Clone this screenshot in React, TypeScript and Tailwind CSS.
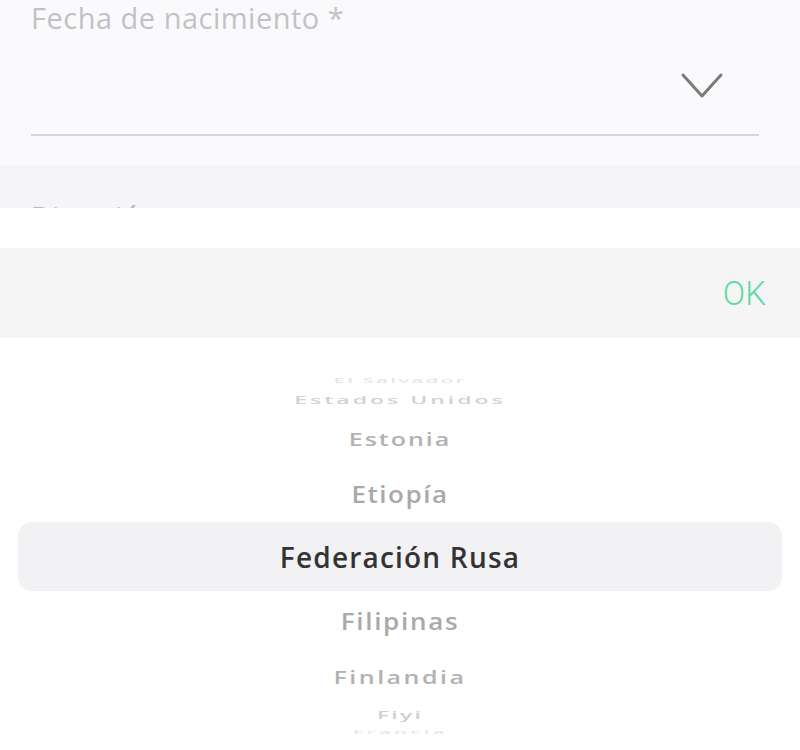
import React from 'react';

type Row = {
  label: string;
  h: string;
  scale: string;
  color: string;
  size: string;
  track: string;
};

const ROWS_ABOVE: Row[] = [
  { label: 'El Salvador', h: 'h-[17px]', scale: 'scale-y-[0.3]', color: 'text-[#e6e6e6]', size: 'text-[21px]', track: 'tracking-[2px]' },
  { label: 'Estados Unidos', h: 'h-[21px]', scale: 'scale-y-[0.5]', color: 'text-[#d2d2d2]', size: 'text-[23px]', track: 'tracking-[3px]' },
  { label: 'Estonia', h: 'h-[56px]', scale: 'scale-y-[0.75]', color: 'text-[#b2b2b2]', size: 'text-[25px]', track: 'tracking-[2px]' },
  { label: 'Etiopía', h: 'h-[56px]', scale: 'scale-y-[0.92]', color: 'text-[#a9a9a9]', size: 'text-[26px]', track: 'tracking-[1.5px]' },
];

const ROWS_BELOW: Row[] = [
  { label: 'Filipinas', h: 'h-[60px]', scale: 'scale-y-[0.92]', color: 'text-[#a9a9a9]', size: 'text-[26px]', track: 'tracking-[1.7px]' },
  { label: 'Finlandia', h: 'h-[50px]', scale: 'scale-y-[0.75]', color: 'text-[#b2b2b2]', size: 'text-[25px]', track: 'tracking-[2.5px]' },
  { label: 'Fiyi', h: 'h-[26px]', scale: 'scale-y-[0.5]', color: 'text-[#cfcfcf]', size: 'text-[23px]', track: 'tracking-[2.2px]' },
  { label: 'Francia', h: 'h-[10px]', scale: 'scale-y-[0.25]', color: 'text-[#e6e6e6]', size: 'text-[21px]', track: 'tracking-[3px]' },
];

function WheelRow({ row }: { row: Row }) {
  return (
    <div className={`${row.h} flex items-center justify-center overflow-hidden shrink-0`}>
      <span className={`${row.size} ${row.color} ${row.scale} ${row.track} font-semibold leading-none`}>
        {row.label}
      </span>
    </div>
  );
}

export default function App() {
  return (
    <div className="w-[800px] h-[750px] overflow-hidden bg-white flex flex-col" style={{ fontFamily: '"Open Sans", "Noto Sans", sans-serif' }}>
      {/* date field */}
      <div className="h-[165px] shrink-0 bg-[#fafafc] pl-[31px] pr-[41px] flex flex-col">
        <p className="text-[29px] leading-[35px] text-[#c2c2c4] tracking-[0.5px]">Fecha de nacimiento *</p>
        <div className="flex justify-end pr-[35px] mt-[36px]">
          <svg width="44" height="28" viewBox="0 0 44 28" fill="none">
            <polyline points="3,4 22,25 41,4" stroke="#7a7a7a" strokeWidth="3" strokeLinecap="round" strokeLinejoin="round" />
          </svg>
        </div>
        <div className="mt-[35px] h-[2px] bg-[#d6d6d8]" />
      </div>

      {/* next field, cut off by the sheet */}
      <div className="h-[43px] shrink-0 bg-[#f5f5f7] px-[31px] overflow-hidden">
        <p className="text-[29px] leading-[38px] text-[#b8b8ba] pt-[33px]">Dirección</p>
      </div>

      <div className="h-[40px] shrink-0 bg-white" />

      {/* toolbar */}
      <div className="h-[90px] shrink-0 bg-[#f5f5f5] flex items-center justify-end pr-[34px]">
        <button className="text-[33px] font-light text-[#5fdaa5] leading-none" style={{ fontFamily: 'Roboto, sans-serif' }}>
          OK
        </button>
      </div>

      {/* picker wheel */}
      <div className="flex-1 bg-white flex flex-col pt-[34px]">
        {ROWS_ABOVE.map((r) => (
          <WheelRow key={r.label} row={r} />
        ))}
        <div className="mx-[18px] h-[69px] shrink-0 rounded-[14px] bg-[#f2f2f4] flex items-center justify-center">
          <span className="text-[28px] font-semibold text-[#333333] tracking-[1.2px] leading-none">Federación Rusa</span>
        </div>
        {ROWS_BELOW.map((r) => (
          <WheelRow key={r.label} row={r} />
        ))}
      </div>
    </div>
  );
}
